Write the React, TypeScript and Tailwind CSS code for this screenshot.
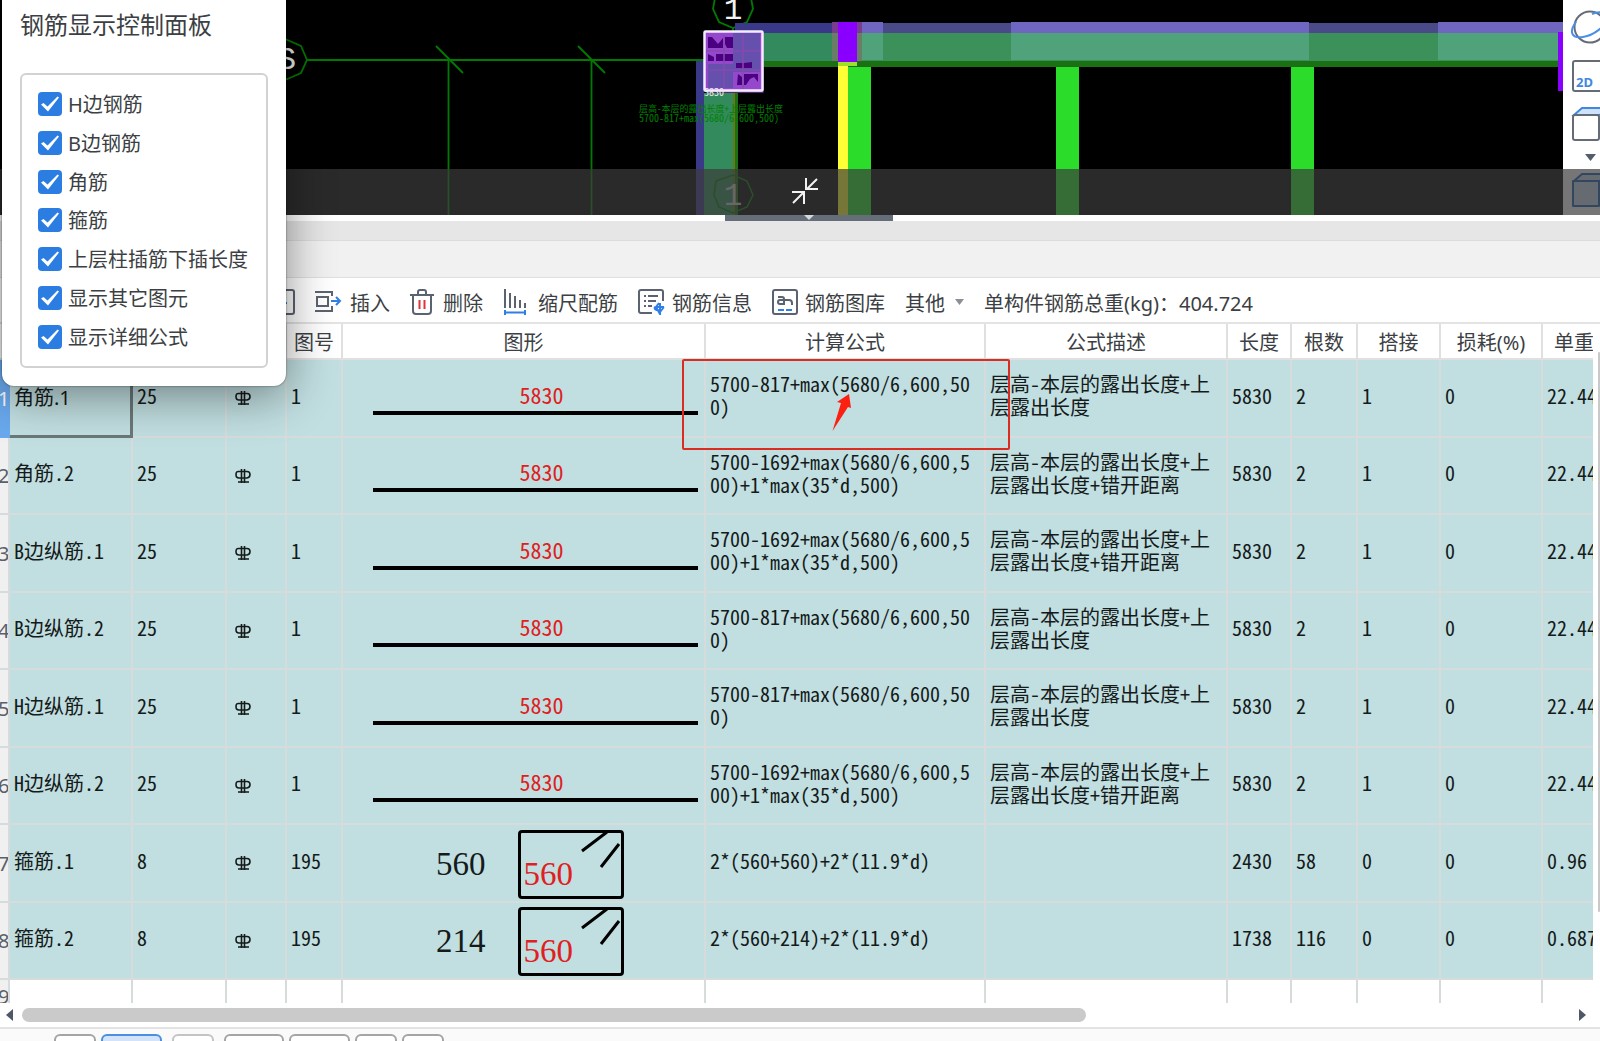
import React from 'react';

const SANS = "font-['Noto_Sans','Noto_Sans_CJK_SC',sans-serif]";
const GRID = "font-['Noto_Sans_CJK_SC',sans-serif] [font-feature-settings:'hwid']";

const layers = ['H边钢筋', 'B边钢筋', '角筋', '箍筋', '上层柱插筋下插长度', '显示其它图元', '显示详细公式'];

const SHORT = { formula: '5700-817+max(5680/6,600,500)', desc: '层高-本层的露出长度+上层露出长度' };
const LONG = { formula: '5700-1692+max(5680/6,600,500)+1*max(35*d,500)', desc: '层高-本层的露出长度+上层露出长度+错开距离' };
const MAIN = { dia: 25, fig: 1, len: 5830, count: 2, lap: 1, loss: 0, weight: '22.44' };

const rows = [
  { name: '角筋.1', ...MAIN, ...SHORT },
  { name: '角筋.2', ...MAIN, ...LONG },
  { name: 'B边纵筋.1', ...MAIN, ...LONG },
  { name: 'B边纵筋.2', ...MAIN, ...SHORT },
  { name: 'H边纵筋.1', ...MAIN, ...SHORT },
  { name: 'H边纵筋.2', ...MAIN, ...LONG },
  { name: '箍筋.1', dia: 8, fig: 195, side: 560, formula: '2*(560+560)+2*(11.9*d)', desc: '', len: 2430, count: 58, lap: 0, loss: 0, weight: '0.96' },
  { name: '箍筋.2', dia: 8, fig: 195, side: 214, formula: '2*(560+214)+2*(11.9*d)', desc: '', len: 1738, count: 116, lap: 0, loss: 0, weight: '0.687' },
];

export default function App() {
  return (
    <div className={`relative flex h-screen flex-col overflow-hidden bg-white text-[20px] text-[#3c3f44] ${SANS}`}>
      <Viewport />
      <Splitter />
      <Toolbar />
      <RebarTable />
      <ScrollBar />
      <BottomBar />
      <ControlPanel />
      <Annotation />
    </div>
  );
}

function Viewport() {
  return (
    <div className="relative flex h-[215px] shrink-0 bg-black">
      <div className="min-w-0 flex-1 overflow-hidden">
        <Drawing />
      </div>
      <div className="w-[37px] shrink-0 overflow-hidden bg-white">
        <ViewTools />
      </div>
      <div className="absolute inset-x-0 bottom-0 h-[46px] bg-[#3c3c3c]/70">
        <button aria-label="collapse" className="absolute top-[9px] left-[792px]">
          <svg width="27" height="26" fill="none" stroke="#f2f2f2" strokeWidth="2">
            <path d="M25 1 15 11M14 0V11H26M1 25 11 15M0 14H12V26" />
          </svg>
        </button>
      </div>
    </div>
  );
}

function Drawing() {
  return (
    <svg className="h-full w-full" viewBox="0 0 1563 215" preserveAspectRatio="xMinYMin slice">
      {/* axis lines */}
      <g stroke="#007a00" strokeWidth="1.8" fill="none">
        <path d="M306 60H704M448.500 60V215M591.500 60V215M436 46l27 27M578 46l27 27" />
        <path d="M270 46 285 39 301 46 307 60 301 73 285 80" />
        <path d="M716 -8 713 9 719 22 733 28 747 22 753 9 750 -8M733 27V34" />
      </g>
      <text x="277" y="69" fontSize="32" fill="#eee" fontFamily="Liberation Mono, monospace">S</text>
      {/* beams */}
      <path fill="#3a3888" d="M735 23H838V33H735zM696 61H704V215H696z" />
      <path fill="#4a4a88" d="M857 23H1563V33H857z" />
      <path fill="#6f66c2" d="M862 22H883V33H862zM1011 22H1309V33H1011zM1438 22H1563V33H1438z" />
      <path fill="#338a5c" d="M763 33H838V61H763zM704 93H733V215H704z" />
      <path fill="#3c905a" d="M857 33H1558V61H857z" />
      <path fill="#50a27a" d="M862 33H883V60H862zM1011 33H1309V60H1011zM1438 33H1558V60H1438z" />
      <path fill="#1a7012" d="M763 61H1558V67H763zM735 93H738V215H735z" />
      <path fill="#687a16" d="M733 93H735V215H733z" />
      <path fill="#7a3c90" d="M832 22H838V33H832zM857 22H862V33H857z" />
      <path fill="#6a7d66" d="M832 33H838V61H832zM857 33H862V61H857z" />
      <path fill="#8a00ff" d="M838 22H857V62H838zM1558 32H1563V91H1558z" />
      <path fill="#9be02a" d="M838 62H857V66H838z" />
      <path fill="#ffff35" d="M838 66H848V215H838z" />
      <path fill="#2bdc2b" d="M848 67H871V215H848zM1056 67H1079V215H1056zM1291 67H1314V215H1291z" />
      {/* column section */}
      <rect x="704.500" y="32" width="58" height="60" fill="#9648cc" />
      <path fill="#6650ae" d="M733 33H760V72H733zM708 64H733V88H708z" />
      <path fill="#4b0082" d="M708 37h4l6 7 5 -6v10h-15zM725 37h8v11h-6l-2 -4zM708 54l6 3v4h-6zM716 54h17v7h-17zM736 63h8l8 -1v6h-16zM738 74l4 3v8h-5zM744 74h14v8l-4 -5 -4 2 -4 6h-2z" />
      <path stroke="#8848b0" strokeWidth="1.500" d="M724 35V90M743 35V90M706 51H760M706 70H760" />
      <path stroke="#a050e0" strokeWidth="3" d="M706 91H762V36" fill="none" />
      <rect x="704.500" y="31.500" width="58" height="59" rx="1" fill="none" stroke="#f4ecff" strokeWidth="2.500" />
      <text x="704" y="96" fontSize="10" fill="#eee" className={GRID}>5830</text>
      <g fill="#008000" className={GRID}>
        <text x="639" y="112" fontSize="9">层高-本层的露出长度+上层露出长度</text>
        <text x="639" y="122" fontSize="10">5700-817+max(5680/6,600,500)</text>
      </g>
      <g fill="#f2f2f2" fontSize="31" fontFamily="Liberation Mono, monospace" textAnchor="middle">
        <text x="733" y="19">1</text>
        <text x="733" y="205" fill="#ccc">1</text>
      </g>
      <path d="M716 181 733 175 747 181 753 195 747 207 733 213 719 207 714 195z" fill="none" stroke="#007a00" strokeWidth="1.500" />
    </svg>
  );
}

function ViewTools() {
  return (
    <svg width="60" height="215" fill="none" strokeWidth="2">
      <circle cx="27" cy="27" r="15.500" stroke="#666c77" />
      <path d="M13 22C6 31 8 39 20 37 32 35 42 26 44 19 45 12 36 11 29 14" stroke="#4a90e8" />
      <rect x="10" y="61" width="40" height="30" rx="2" stroke="#666c77" />
      <text x="13" y="87" fontSize="13" fontWeight="700" fill="#3f87e0" className={SANS}>2D</text>
      <path d="M11 115 19 108H44L37 115z" fill="#cfe2fb" stroke="#3f87e0" />
      <rect x="10" y="115" width="26" height="25" rx="2" stroke="#666c77" />
      <path d="M22 154H33L27.500 161z" fill="#555d6b" />
      <path d="M11 181 19 174H44L37 181V205M10 181H36V206H10z" fill="#c9daf2" stroke="#1f5fb5" strokeLinejoin="round" />
    </svg>
  );
}

function Splitter() {
  return (
    <div className="shrink-0">
      <div className="h-[6px] bg-white">
        <div className="ml-[725px] flex h-full w-[168px] justify-center bg-[#646d78]">
          <svg width="12" height="6" fill="#d5d8dc"><path d="M1 0H11L6 5z" /></svg>
        </div>
      </div>
      <div className="h-[20px] border-b border-[#dcdcdc] bg-[#e6e6e6]" />
      <div className="h-[37px] border-b border-[#e0e0e0] bg-[#f1f1f1]" />
    </div>
  );
}

function Toolbar() {
  return (
    <div className="flex h-[46px] shrink-0 items-center border-b-2 border-[#e3e3e3] pt-1 pl-[270px] leading-6 whitespace-nowrap">
      <button aria-label="paste">
        <svg width="25" height="26" fill="none" stroke="#5c6370" strokeWidth="2">
          <rect x="1" y="1" width="23" height="24" rx="2" />
          <path d="M8 14H17" stroke="#2f7fe6" />
        </svg>
      </button>
      <ToolButton label="插入" className="ml-[20px] gap-[8px]">
        <svg width="27" height="24" fill="none" stroke="#5c6370" strokeWidth="2">
          <path d="M0 2H17V6M2 7H13V16H2zM0 21H17V16" />
          <path d="M16 11H25M21 7 25 11 21 15" stroke="#2f7fe6" />
        </svg>
      </ToolButton>
      <ToolButton label="删除" className="ml-[20px] gap-[8px]">
        <svg width="25" height="26" fill="none" stroke="#5c6370" strokeWidth="2">
          <path d="M0 6H24M8 6V3Q8 1 10 1H14Q16 1 16 3V6M3 6V22Q3 25 6 25H18Q21 25 21 22V6" />
          <path d="M9.500 11V20M14.500 11V20" stroke="#e0343c" />
        </svg>
      </ToolButton>
      <ToolButton label="缩尺配筋" className="ml-[20px] gap-[10px]">
        <svg width="25" height="26" fill="none" stroke="#5c6370" strokeWidth="2">
          <path d="M2 0V19M7 4V19M12 7V19M17 11V19M22 14V19" />
          <path d="M2 21V26M22 21V26M2 23.500H22" stroke="#2f7fe6" />
        </svg>
      </ToolButton>
      <ToolButton label="钢筋信息" className="ml-[20px] gap-[6px]">
        <svg width="28" height="26" fill="none" stroke="#5c6370" strokeWidth="2">
          <path d="M25 12V3Q25 1 23 1H3Q1 1 1 3V22Q1 24 3 24H14" />
          <path d="M6 7H8M10 7H20M6 12H8M10 12H18M6 17H8M10 17H14" />
          <path d="M26 18H18Q16 18 17 20 19 22 22 21M21 14 18 18 22 25V14M26 18 22 23" stroke="#2f7fe6" />
        </svg>
      </ToolButton>
      <ToolButton label="钢筋图库" className="ml-[20px] gap-[6px]">
        <svg width="27" height="26" fill="none" stroke="#5c6370" strokeWidth="2">
          <rect x="1" y="1" width="24" height="24" rx="2" />
          <path d="M6 8H10Q12 8 12 10V15H8Q6 15 6 13 6 11 8 11H17Q20 11 20 14V16" />
          <path d="M6 21H12M14 21H20" stroke="#2f7fe6" />
        </svg>
      </ToolButton>
      <button className="ml-[20px] flex items-center gap-[10px]">
        <span className="pt-[3px]">其他</span>
        <svg width="9" height="6" fill="#8a8f96"><path d="M0 0H9L4.500 6z" /></svg>
      </button>
      <div className="ml-[20px] pt-[3px]">单构件钢筋总重(kg)：404.724</div>
    </div>
  );
}

function ToolButton({ label, className, children }: { label: string; className: string; children: React.ReactNode }) {
  return (
    <button className={`flex items-center ${className}`}>
      {children}
      <span className="pt-[3px]">{label}</span>
    </button>
  );
}

function RebarTable() {
  return (
    <div className="relative h-[679px] shrink-0 overflow-hidden pr-[7px]">
      <table className="w-full table-fixed border-separate border-spacing-0 [&_td]:overflow-hidden [&_td]:border-r-2 [&_td]:border-b-2 [&_td]:border-[#d6dcdc] [&_td]:pb-[6px] [&_td]:pl-1 [&_td:last-child]:border-r-0 [&_th]:overflow-hidden [&_th]:border-r-2 [&_th]:border-b-2 [&_th]:border-[#e0e0e0] [&_th]:pt-1 [&_th]:font-normal [&_th:last-child]:border-r-0">
        <colgroup>
          <col className="w-[10px]" />
          <col className="w-[123px]" />
          <col className="w-[94px]" />
          <col className="w-[60px]" />
          <col className="w-[56px]" />
          <col />
          <col className="w-[280px]" />
          <col className="w-[242px]" />
          <col className="w-[64px]" />
          <col className="w-[66px]" />
          <col className="w-[83px]" />
          <col className="w-[102px]" />
          <col className="w-[50px]" />
        </colgroup>
        <thead>
          <tr className="h-[36px] leading-6 whitespace-nowrap">
            <th /><th /><th /><th />
            <th>图号</th>
            <th>图形</th>
            <th>计算公式</th>
            <th>公式描述</th>
            <th>长度</th>
            <th>根数</th>
            <th>搭接</th>
            <th>损耗(%)</th>
            <th className="pl-[11px] text-left">单重</th>
          </tr>
        </thead>
        <tbody className={`leading-[23px] text-[#151a1a] ${GRID}`}>
          {rows.map((row, i) => (
            <tr key={row.name} className="bg-[#c1dee0] odd:h-[78px] even:h-[77px]">
              <RowNumber n={i + 1} active={i === 0} />
              {i === 0 ? (
                <td className={`border-r-[3px]! border-b-[3px]! border-[#6c7778]! pb-0! ${SANS}`}>{row.name}</td>
              ) : (
                <td className="whitespace-nowrap">{row.name}</td>
              )}
              <td>{row.dia}</td>
              <td className="pb-0!"><Grade /></td>
              <td>{row.fig}</td>
              <td className="p-0!">{row.side ? <Stirrup side={row.side} /> : <StraightBar length={row.len} />}</td>
              <td className="pr-3 break-all">{row.formula}</td>
              <td className="pr-1 break-all">{row.desc}</td>
              <td>{row.len}</td>
              <td>{row.count}</td>
              <td>{row.lap}</td>
              <td>{row.loss}</td>
              <td className="whitespace-nowrap">{row.weight}</td>
            </tr>
          ))}
          <tr className="h-[77px] align-top">
            <td className="bg-[#f0f0f0] p-0! pt-1!"><span className={`-ml-[2px] text-[#5a5f68] ${SANS}`}>9</span></td>
            <td /><td /><td /><td /><td /><td /><td /><td /><td /><td /><td /><td />
          </tr>
        </tbody>
      </table>
      <div className="absolute top-[28px] right-0 h-[560px] w-[2px] rounded-full bg-[#c9c9c9]" />
    </div>
  );
}

function RowNumber({ n, active }: { n: number; active: boolean }) {
  return (
    <td className={`p-0! ${SANS} ${active ? 'border-[#6aa9ee]! bg-[#6aa9ee] text-white' : 'bg-[#f0f0f0] text-[#5a5f68]'}`}>
      <span className="-ml-[2px]">{n}</span>
    </td>
  );
}

function Grade() {
  return (
    <svg className="ml-[4px]" width="16" height="16" fill="none" stroke="#151a1a" strokeWidth="1.600">
      <path d="M4 3.500H12Q15 3.500 15 6.500T12 10H4Q1 10 1 6.500T4 3.500zM6.500 1V15M9.500 1V15M3 14H14" />
    </svg>
  );
}

function StraightBar({ length }: { length: number }) {
  return (
    <div className="mr-[6px] ml-[30px] border-b-4 border-black pb-[5px] pl-[12px] text-center text-[22px] leading-6 text-[#e02020]">
      {length}
    </div>
  );
}

function Stirrup({ side }: { side: number }) {
  return (
    <div className="flex items-center pt-[2px] pl-[93px] font-['Liberation_Serif',serif] text-[33px] leading-none">
      <span>{side}</span>
      <div className="relative ml-[32px] h-[69px] w-[106px] rounded-sm border-[3px] border-black pt-[25px] pl-[3px] text-[#e02020]">
        560
        <svg className="absolute -top-[3px] -right-[3px]" width="44" height="40" stroke="#000" strokeWidth="3">
          <path d="M2 21 27 2M21 37 39 14" />
        </svg>
      </div>
    </div>
  );
}

function ScrollBar() {
  return (
    <div className="flex h-[26px] shrink-0 items-center gap-[9px] border-b-2 border-[#e3e3e3] pr-[14px] pl-[6px]">
      <svg width="7" height="12" fill="#4f5866"><path d="M7 0V12L0 6z" /></svg>
      <div className="flex-1">
        <div className="h-[14px] w-11/16 rounded-full bg-[#cacaca]" />
      </div>
      <svg width="7" height="12" fill="#4f5866"><path d="M0 0V12L7 6z" /></svg>
    </div>
  );
}

function BottomBar() {
  const base = 'h-8 shrink-0 rounded-md border-2';
  return (
    <div className="flex min-h-0 flex-1 gap-[5px] overflow-hidden bg-[#fafafa] pt-[5px] pl-[54px]">
      <button aria-label="tool 1" className={`${base} w-[42px] border-[#a5a5a5] bg-white`} />
      <button aria-label="tool 2" className={`${base} w-[61px] border-[#4a8fe2] bg-[#d3e4fa]`} />
      <button aria-label="tool 3" className={`${base} ml-[5px] w-[42px] border-[#c4c4c4] bg-white`} />
      <button aria-label="tool 4" className={`${base} ml-[5px] w-[60px] border-[#a5a5a5] bg-white`} />
      <button aria-label="tool 5" className={`${base} w-[61px] border-[#a5a5a5] bg-white`} />
      <button aria-label="tool 6" className={`${base} w-[42px] border-[#a5a5a5] bg-white`} />
      <button aria-label="tool 7" className={`${base} w-[42px] border-[#a5a5a5] bg-white`} />
    </div>
  );
}

function ControlPanel() {
  return (
    <div className="absolute top-0 left-[2px] w-[284px] rounded-b-xl bg-white px-[18px] pt-[8px] pb-[18px] shadow-[0_8px_48px_rgba(0,0,0,0.45),0_0_2px_rgba(0,0,0,0.6)]">
      <h2 className="text-[24px] leading-[34px] whitespace-nowrap">钢筋显示控制面板</h2>
      <div className="mt-[31px] flex h-[295px] flex-col justify-between rounded-md border-2 border-[#d2d2d2] pt-[17px] pb-[17px] pl-4">
        {layers.map((label) => (
          <label key={label} className="flex h-6 items-center gap-[6px] leading-6 whitespace-nowrap">
            <span className="relative h-6 w-6">
              <input type="checkbox" defaultChecked className="block h-6 w-6 appearance-none rounded-sm bg-[#2b7de2]" />
              <svg className="pointer-events-none absolute inset-0" width="24" height="24" fill="#fff">
                <path d="M3 12.500 5.500 11 9.500 14.500 19.500 4.500 21 5.500 10 19.500z" />
              </svg>
            </span>
            <span className="pt-[2px]">{label}</span>
          </label>
        ))}
      </div>
    </div>
  );
}

function Annotation() {
  return (
    <div className="pointer-events-none absolute top-[359px] left-[682px] h-[91px] w-[328px] rounded-xs border-2 border-[#dc2c22]">
      <svg width="324" height="87" fill="#fb2012">
        <path d="M165 33 153 41 157 42 148.500 70 164 46 167 47z" />
      </svg>
    </div>
  );
}
